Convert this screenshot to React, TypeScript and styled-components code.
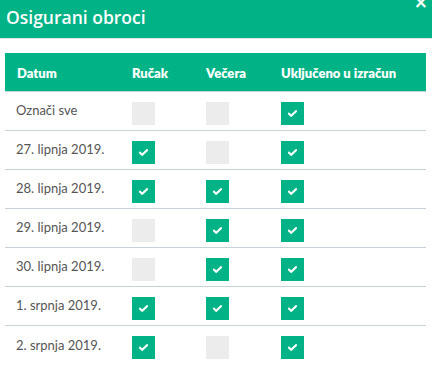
import React from "react";
import styled, { createGlobalStyle } from "styled-components";

const GREEN = "#00b386";

const Global = createGlobalStyle`
  html, body { margin: 0; padding: 0; background: #fff; }
  body { font-family: Lato, "Open Sans", "Liberation Sans", sans-serif; }
`;

const Modal = styled.div`
  width: 432px;
  height: 376px;
  background: #fff;
  overflow: hidden;
`;

const TitleBar = styled.div`
  position: relative;
  height: 38px;
  background: ${GREEN};
  border-bottom: 1px solid #dde4e2;
  display: flex;
  align-items: center;
  padding-left: 6px;
`;

const Title = styled.h3`
  margin: 0;
  margin-top: -4px;
  color: #fff;
  font-family: "Open Sans", sans-serif;
  font-size: 17.5px;
  font-weight: 600;
`;

const Close = styled.span`
  position: absolute;
  right: 4px;
  top: -6px;
  color: #fff;
  font-size: 17px;
  font-weight: 700;
  line-height: 1;
  font-family: "DejaVu Sans", sans-serif;
`;

const Body = styled.div`
  padding: 14px 6px 0 5px;
`;

const Row = styled.div<{ $head?: boolean; $last?: boolean }>`
  display: grid;
  grid-template-columns: 115px 74px 75px 1fr;
  height: 39px;
  background: ${(p) => (p.$head ? GREEN : "#fff")};
  border-bottom: ${(p) => (p.$last ? "none" : "1px solid #c6d1d8")};
  box-sizing: border-box;
`;

const HeadCell = styled.div`
  display: flex;
  align-items: center;
  padding-left: 12px;
  color: #fff;
  font-size: 13px;
  font-weight: 800;
  padding-top: 1px;
`;

const TextCell = styled.div`
  display: flex;
  align-items: center;
  padding-left: 11px;
  color: #555;
  font-size: 13px;
  padding-bottom: 2px;
`;

const BoxCell = styled.div`
  display: flex;
  align-items: flex-start;
  padding-left: 12px;
  padding-top: 10px;
`;

const Box = styled.span<{ $on: boolean }>`
  width: 23px;
  height: 23px;
  background: ${(p) => (p.$on ? GREEN : "#ececec")};
  display: flex;
  align-items: center;
  justify-content: center;
`;

const Check = () => (
  <svg width="9" height="7" viewBox="0 0 9 7">
    <path d="M1 3.8 L3.2 5.8 L8 1.2" stroke="#fff" strokeWidth="2.1" fill="none" strokeLinecap="square" />
  </svg>
);

const rows: [string, boolean, boolean, boolean][] = [
  ["Označi sve", false, false, true],
  ["27. lipnja 2019.", true, false, true],
  ["28. lipnja 2019.", true, true, true],
  ["29. lipnja 2019.", false, true, true],
  ["30. lipnja 2019.", false, true, true],
  ["1. srpnja 2019.", true, true, true],
  ["2. srpnja 2019.", true, false, true],
];

export default function App() {
  return (
    <Modal>
      <Global />
      <TitleBar>
        <Title>Osigurani obroci</Title>
        <Close>×</Close>
      </TitleBar>
      <Body>
        <Row $head>
          <HeadCell>Datum</HeadCell>
          <HeadCell>Ručak</HeadCell>
          <HeadCell>Večera</HeadCell>
          <HeadCell>Uključeno u izračun</HeadCell>
        </Row>
        {rows.map(([label, a, b, c], i) => (
          <Row key={label} $last={i === rows.length - 1}>
            <TextCell>{label}</TextCell>
            {[a, b, c].map((on, j) => (
              <BoxCell key={j}>
                <Box $on={on}>{on && <Check />}</Box>
              </BoxCell>
            ))}
          </Row>
        ))}
      </Body>
    </Modal>
  );
}
